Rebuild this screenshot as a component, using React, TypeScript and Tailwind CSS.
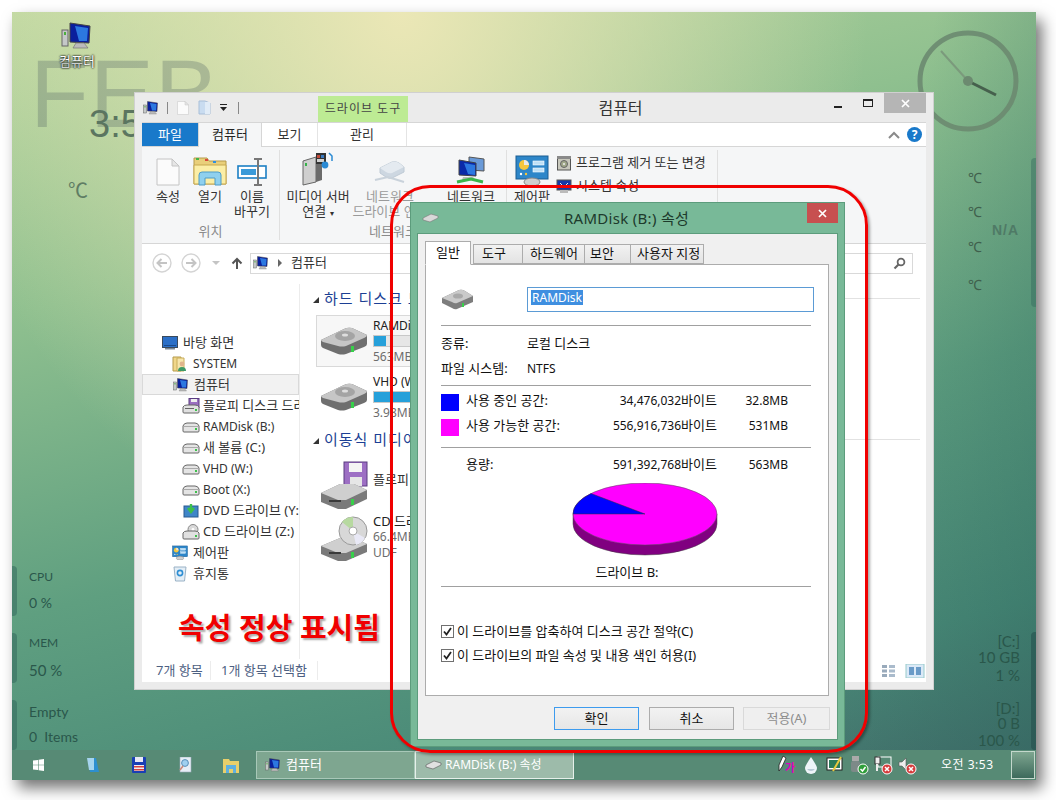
import React from "react";

// ---- icons ----
const PcIcon = ({ size = 16 }: { size?: number }) => (
  <svg width={size} height={size} viewBox="0 0 32 32" className="shrink-0">
    <rect x="1" y="10" width="6" height="16" fill="#c4c8c8" stroke="#666" />
    <rect x="3" y="12" width="2" height="3" fill="#4caf3c" />
    <path d="M9 3 L29 6 L28 23 L9 22 Z" fill="#0a1f9c" stroke="#444" />
    <path d="M14 6 L27 8 L26 21 L18 21 Z" fill="#2c78e0" />
    <path d="M15 23 h8 l4 5 h-15 Z" fill="#bbb" stroke="#777" strokeWidth=".7" />
  </svg>
);

const DriveBig = () => (
  <svg width="48" height="30" viewBox="0 0 48 30" className="shrink-0">
    <path d="M1 14 L24 3 Q28 1 32 2 L47 9 V18 Q47 20 44 21 L26 28 Q22 29 18 28 L3 22 Q1 21 1 19 Z" fill="#6f6f6f" />
    <path d="M1 14 L24 3 Q28 1 32 2 L47 9 Q47 11 44 12 L26 20 Q22 21 18 20 L3 16 Q1 15 1 14 Z" fill="#c6c6c6" />
    <ellipse cx="25" cy="10" rx="10" ry="5" fill="#a4a4a4" />
    <ellipse cx="25" cy="9" rx="3" ry="1.5" fill="#dedede" />
    <rect x="31" y="20" width="3" height="6" fill="#37d04a" />
  </svg>
);

const DriveSmall = () => (
  <svg width="18" height="12" viewBox="0 0 18 12" className="shrink-0">
    <path d="M1 5 Q2 2 5 2 H13 Q16 2 17 5 V10 Q17 11 16 11 H2 Q1 11 1 10 Z" fill="#e4e4e4" stroke="#666" />
    <rect x="1.5" y="5" width="15" height="1" fill="#aaa" />
    <rect x="13" y="7" width="2" height="2" fill="#3cc04a" />
  </svg>
);

const FolderBig = () => (
  <svg width="34" height="30" viewBox="0 0 34 30" className="shrink-0">
    <path d="M1 2 H14 L16 5 H33 V28 H1 Z" fill="#e9cf7a" stroke="#b59a4a" />
    <rect x="3" y="2" width="3" height="2" fill="#43b649" />
    <rect x="12" y="3" width="3" height="2" fill="#d9483b" />
    <rect x="20" y="5" width="3" height="2" fill="#2f8fe0" />
    <path d="M1 9 H33 V28 H1 Z" fill="#fbeea6" stroke="#c7a850" />
    <path d="M6 29 V19 Q6 16 9 16 H25 Q28 16 28 19 V29 H22 V22 H12 V29 Z" fill="#8fd0ee" stroke="#4f9cc7" />
  </svg>
);

const RenameIcon = () => (
  <svg width="30" height="28" viewBox="0 0 30 28" className="shrink-0">
    <rect x="1" y="8" width="28" height="12" fill="#fff" stroke="#1c7fc4" strokeWidth="1.6" />
    <rect x="4" y="11" width="15" height="6" fill="#3a9ad9" />
    <path d="M17 1 H25 M21 1 V27 M17 27 H25" stroke="#777" strokeWidth="2" fill="none" />
  </svg>
);

const DocIcon = ({ w = 24, h = 28 }: { w?: number; h?: number }) => (
  <svg width={w} height={h} viewBox="0 0 24 28" className="shrink-0">
    <path d="M1 1 H16 L23 8 V27 H1 Z" fill="#fbfbfb" stroke="#c4c4c4" />
    <path d="M16 1 V8 H23 Z" fill="#e6e6e6" stroke="#c4c4c4" />
  </svg>
);

const MediaServerIcon = () => (
  <svg width="32" height="34" viewBox="0 0 32 34" className="shrink-0">
    <path d="M1 9 L14 5 V30 L1 33 Z" fill="#cfcfcf" stroke="#666" />
    <path d="M14 5 L20 8 V28 L14 30 Z" fill="#6b6b6b" />
    <rect x="3" y="11" width="2" height="3" fill="#36b24a" />
    <rect x="14" y="1" width="10" height="11" fill="#333" />
    <rect x="15" y="3" width="3" height="3" fill="#c04a3a" />
    <rect x="19" y="3" width="3" height="3" fill="#3a7ac0" />
    <rect x="15" y="7" width="7" height="3" fill="#d0d0d0" />
    <circle cx="23" cy="13" r="3.4" fill="#2a8ad4" />
    <path d="M27 1 L30 4 V9" fill="none" stroke="#2a8ad4" strokeWidth="1.5" />
  </svg>
);

const NetDriveIcon = () => (
  <svg width="32" height="26" viewBox="0 0 32 26" className="shrink-0 opacity-50">
    <path d="M6 8 L18 2 Q22 1 25 3 L30 7 V12 L18 18 Q15 19 12 17 L6 13 Z" fill="#a6b9cc" stroke="#8aa0b5" />
    <path d="M6 8 L18 2 Q22 1 25 3 L30 7 L18 13 Q15 14 12 12 Z" fill="#d5e0ea" />
    <path d="M1 20 L14 17 L30 22" fill="none" stroke="#9fb0c0" strokeWidth="2" />
  </svg>
);

const NetworkIcon = () => (
  <svg width="32" height="30" viewBox="0 0 32 30" className="shrink-0">
    <path d="M14 1 L29 3 V15 L14 14 Z" fill="#6a9ad8" stroke="#555" />
    <path d="M4 4 L21 7 V20 L4 19 Z" fill="#0a2aa8" stroke="#444" />
    <path d="M9 7 L20 9 V19 L13 18 Z" fill="#2c78e0" />
    <path d="M8 21 h10 l3 3 h-14 Z" fill="#bbb" />
    <path d="M2 26 L16 23 L28 26" fill="none" stroke="#3bb54a" strokeWidth="3" />
  </svg>
);

const ControlPanelIcon = ({ w = 34, h = 32 }: { w?: number; h?: number }) => (
  <svg width={w} height={h} viewBox="0 0 34 32" className="shrink-0">
    <rect x="1" y="2" width="32" height="23" fill="#2d86c9" stroke="#1b5c92" />
    <circle cx="9" cy="11" r="5" fill="#f5c63c" />
    <path d="M9 11 V6 A5 5 0 0 1 14 11 Z" fill="#e8e8e8" />
    <rect x="18" y="7" width="11" height="4" fill="#bfe0f6" stroke="#fff" strokeWidth=".6" />
    <rect x="18" y="14" width="11" height="4" fill="#bfe0f6" stroke="#fff" strokeWidth=".6" />
    <circle cx="6" cy="20" r="1.2" fill="#fff" />
    <circle cx="11" cy="20" r="1.2" fill="#f5c63c" />
    <ellipse cx="17" cy="28" rx="8" ry="4" fill="#cfcfcf" stroke="#888" />
  </svg>
);

const ProgramIcon = () => (
  <svg width="16" height="16" viewBox="0 0 16 16" className="shrink-0">
    <rect x="1.5" y="3" width="13" height="12" fill="#c8c8bc" stroke="#555" />
    <rect x="1" y="1" width="14" height="3" fill="#8a8a8a" />
    <circle cx="8" cy="9" r="3.5" fill="#a0a888" stroke="#666" />
    <circle cx="8" cy="9" r="1" fill="#eee" />
  </svg>
);

const SystemIcon = () => (
  <svg width="16" height="15" viewBox="0 0 16 15" className="shrink-0">
    <rect x="1" y="1" width="14" height="10" fill="#1638a8" stroke="#555" />
    <path d="M4 4 L8 8 L12 4" stroke="#e8e8e8" fill="none" />
    <rect x="4" y="11" width="8" height="3" fill="#bbb" />
  </svg>
);

const DesktopNavIcon = () => (
  <svg width="16" height="14" viewBox="0 0 16 14" className="shrink-0">
    <rect x=".5" y=".5" width="15" height="11" fill="#2b6fc7" stroke="#3a4a5c" />
    <rect x="2" y="9" width="12" height="1" fill="#1a4a8a" />
    <rect x="3" y="12" width="10" height="1.5" fill="#7b8794" />
  </svg>
);

const UserFolderIcon = () => (
  <svg width="16" height="16" viewBox="0 0 16 16" className="shrink-0">
    <path d="M1 1 H9 V15 H1 Z" fill="#f0d78a" stroke="#b59a4a" />
    <path d="M5 2 H12 V15 H5 Z" fill="#f7e6ac" stroke="#c9ad5a" />
    <circle cx="10" cy="8" r="2.4" fill="#e0b48c" />
    <path d="M6 15 Q6 11 10 11 Q14 11 14 15 Z" fill="#3f9a66" />
  </svg>
);

const FloppyDriveSmall = () => (
  <svg width="18" height="16" viewBox="0 0 18 16" className="shrink-0">
    <rect x="7" y="0.5" width="10" height="9" fill="#9a6fc0" stroke="#5a3c80" />
    <rect x="9" y="1" width="6" height="3" fill="#eee" />
    <path d="M1 9 Q2 7 5 7 H13 Q16 7 17 9 V14 Q17 15 16 15 H2 Q1 15 1 14 Z" fill="#e0e0e0" stroke="#666" />
    <rect x="3" y="10" width="9" height="1" fill="#666" />
    <rect x="13" y="11" width="2" height="2" fill="#3cc04a" />
  </svg>
);

const DvdSmall = () => (
  <svg width="18" height="15" viewBox="0 0 18 15" className="shrink-0">
    <rect x="2" y="3" width="14" height="11" fill="#3f86c8" stroke="#2a5a90" />
    <path d="M9 1 V7 M6 5 L9 9 L12 5" stroke="#3cc04a" strokeWidth="2.4" fill="none" />
  </svg>
);

const CdSmall = () => (
  <svg width="18" height="16" viewBox="0 0 18 16" className="shrink-0">
    <circle cx="11" cy="5.5" r="5" fill="#d9d9d9" stroke="#888" />
    <circle cx="11" cy="5.5" r="1.4" fill="#fff" />
    <path d="M1 9 Q2 7 5 7 H13 Q16 7 17 9 V14 Q17 15 16 15 H2 Q1 15 1 14 Z" fill="#e0e0e0" stroke="#666" />
    <rect x="13" y="11" width="2" height="2" fill="#3cc04a" />
  </svg>
);

const RecycleIcon = () => (
  <svg width="16" height="17" viewBox="0 0 16 17" className="shrink-0">
    <path d="M2 2 H14 L12.5 16 H3.5 Z" fill="#e4eef6" stroke="#9ab2c6" />
    <circle cx="8" cy="8" r="2.6" fill="none" stroke="#2f8fd4" strokeWidth="1.6" />
  </svg>
);

const FloppyBig = () => (
  <svg width="48" height="50" viewBox="0 0 48 50" className="shrink-0">
    <rect x="24" y="1" width="23" height="24" fill="#9d6fc4" stroke="#5a3c80" />
    <rect x="29" y="2" width="13" height="9" fill="#f4f4f4" />
    <rect x="30" y="16" width="12" height="9" fill="#e6e6e6" />
    <path d="M1 32 L20 23 H34 L47 29 V38 L26 48 H18 L1 41 Z" fill="#7a7a7a" />
    <path d="M1 32 L20 23 H34 L47 29 L26 39 H18 Z" fill="#cfcfcf" />
    <rect x="9" y="39" width="12" height="2" fill="#3a3a3a" />
    <rect x="31" y="38" width="3" height="6" fill="#37d04a" />
  </svg>
);

const CdBig = () => (
  <svg width="48" height="46" viewBox="0 0 48 46" className="shrink-0">
    <path d="M1 30 L20 22 H34 L47 28 V36 L26 45 H18 L1 38 Z" fill="#7a7a7a" />
    <path d="M1 30 L20 22 H34 L47 28 L26 37 H18 Z" fill="#cfcfcf" />
    <rect x="9" y="36" width="12" height="2" fill="#3a3a3a" />
    <rect x="31" y="36" width="3" height="6" fill="#37d04a" />
    <circle cx="33" cy="15" r="14" fill="#d8d8d8" stroke="#999" />
    <path d="M33 15 L22 6 A14 14 0 0 1 33 1 Z" fill="#b7d9a0" />
    <path d="M33 15 L45 22 A14 14 0 0 1 36 29 Z" fill="#e9e9f6" />
    <circle cx="33" cy="15" r="4" fill="#fff" stroke="#aaa" />
  </svg>
);

const ArrowCircle = ({ dir }: { dir: "l" | "r" }) => (
  <svg width="20" height="20" viewBox="0 0 20 20" className="shrink-0">
    <circle cx="10" cy="10" r="9" fill="#fff" stroke="#d4d4d4" strokeWidth="1.4" />
    <path d={dir === "l" ? "M15 10 H6 M9.5 6 L5.5 10 L9.5 14" : "M5 10 H14 M10.5 6 L14.5 10 L10.5 14"} stroke="#c4c4c4" strokeWidth="2" fill="none" />
  </svg>
);

const CloseX = () => (
  <svg width="9" height="9" viewBox="0 0 9 9">
    <path d="M1 1 L8 8 M8 1 L1 8" stroke="#fff" strokeWidth="1.7" />
  </svg>
);

const Checked = () => (
  <span className="w-[13px] h-[13px] border border-[#707070] bg-white flex items-center justify-center shrink-0">
    <svg width="11" height="11" viewBox="0 0 11 11">
      <path d="M2 5.5 L4.5 8.5 L9 2" stroke="#222" strokeWidth="1.8" fill="none" />
    </svg>
  </span>
);

// ---- explorer pieces ----
const RibbonBtn = ({ icon, lines, w, muted }: { icon: React.ReactNode; lines: React.ReactNode[]; w: string; muted?: boolean }) => (
  <div className={`flex flex-col items-center shrink-0 ${w} ${muted ? "text-[#9a9a9a]" : "text-[#333]"}`}>
    <div className="h-[30px] flex items-end justify-center">{icon}</div>
    <div className="mt-[3px] text-center leading-[15px] whitespace-nowrap">
      {lines.map((l, i) => (
        <div key={i}>{l}</div>
      ))}
    </div>
  </div>
);

const navItems: { label: string; cls: string; icon: React.ReactNode; selected?: boolean }[] = [
  { label: "바탕 화면", cls: "pl-[20px] gap-[5px] text-[13px]", icon: <DesktopNavIcon /> },
  { label: "SYSTEM", cls: "pl-[30px] gap-[5px]", icon: <UserFolderIcon /> },
  { label: "컴퓨터", cls: "pl-[30px] gap-[5px] text-[13px]", icon: <PcIcon />, selected: true },
  { label: "플로피 디스크 드라이브 (A:)", cls: "pl-[40px] gap-[3px] text-[13px]", icon: <FloppyDriveSmall /> },
  { label: "RAMDisk (B:)", cls: "pl-[40px] gap-[3px]", icon: <DriveSmall /> },
  { label: "새 볼륨 (C:)", cls: "pl-[40px] gap-[3px] text-[13px]", icon: <DriveSmall /> },
  { label: "VHD (W:)", cls: "pl-[40px] gap-[3px]", icon: <DriveSmall /> },
  { label: "Boot (X:)", cls: "pl-[40px] gap-[3px]", icon: <DriveSmall /> },
  { label: "DVD 드라이브 (Y:)", cls: "pl-[40px] gap-[3px] text-[13px]", icon: <DvdSmall /> },
  { label: "CD 드라이브 (Z:)", cls: "pl-[40px] gap-[3px] text-[13px]", icon: <CdSmall /> },
  { label: "제어판", cls: "pl-[30px] gap-[5px] text-[13px]", icon: <ControlPanelIcon w={16} h={15} /> },
  { label: "휴지통", cls: "pl-[30px] gap-[5px] text-[13px]", icon: <RecycleIcon /> },
];

const Heading = ({ label }: { label: string }) => (
  <div className="flex items-center h-[20px] pl-[4px] gap-[5px]">
    <span className="w-0 h-0 border-l-[6px] border-l-transparent border-b-[6px] border-b-[#333] mt-[3px]" />
    <span className="text-[15px] text-[#1c3f94] whitespace-nowrap tracking-[1px]">{label}</span>
    <span className="flex-1 border-t border-[#e2e2e2] ml-[4px]" />
  </div>
);

const DriveItem = ({ name, size, pct, box }: { name: string; size: string; pct: string; box?: boolean }) => (
  <div className={`flex h-[52px] w-[260px] ml-[7px] items-center pl-[3px] border text-[12px] ${box ? "border-[#d9d9d9] bg-[#f7f7f7]" : "border-transparent"}`}>
    <DriveBig />
    <div className="ml-[5px] flex-1 leading-[15px]">
      <div className="text-[#222] whitespace-nowrap">{name}</div>
      <div className="h-[12px] my-[2px] bg-[#e6e6e6] border border-[#c8c8c8]">
        <div className={`h-full bg-[#26a0da] ${pct}`} />
      </div>
      <div className="text-[#6d6d6d]">{size}</div>
    </div>
  </div>
);

const Explorer = () => (
  <div className="absolute left-[122px] top-[80px] w-[800px] h-[598px] bg-[#ebebeb] border border-[#d0d0d0] flex flex-col px-[7px] pb-[7px] text-[13px] text-[#333]">
    {/* title bar */}
    <div className="h-[29px] flex items-center shrink-0 relative">
      <div className="flex items-center w-[175px] ml-[1px]">
        <PcIcon />
        <span className="w-px h-[12px] bg-[#888] ml-[8px]" />
        <span className="ml-[9px]"><DocIcon w={12} h={14} /></span>
        <svg width="13" height="15" viewBox="0 0 13 15" className="ml-[9px]">
          <path d="M1 1 H7 L12 3 V14 H1 Z" fill="#c9dcf0" stroke="#a9bfd8" />
          <rect x="7" y="2" width="5" height="12" fill="#e1ecf7" />
        </svg>
        <svg width="9" height="8" viewBox="0 0 9 8" className="ml-[8px]">
          <rect x="1" y="0" width="7" height="1" fill="#222" />
          <path d="M1 3 H8 L4.5 7 Z" fill="#222" />
        </svg>
        <span className="w-px h-[12px] bg-[#888] ml-[10px]" />
      </div>
      <div className="w-[90px] h-[27px] mt-[3px] bg-[#bdeb94] flex items-center justify-center text-[#444] text-[12px] tracking-[1px]">드라이브 도구</div>
      <div className="flex-1 text-center text-[16px] text-[#333] pl-[10px]">컴퓨터</div>
      <div className="flex items-start h-full">
        <span className="w-[29px] h-[19px] flex items-end justify-center pb-[4px]"><span className="w-[8px] h-[2px] bg-[#222]" /></span>
        <span className="w-[17px] h-[19px] ml-[7px] flex items-center justify-center"><span className="w-[10px] h-[8px] border border-[#222] border-t-2" /></span>
        <span className="w-[42px] h-[20px] ml-[8px] bg-[#b5b5b5] flex items-center justify-center"><CloseX /></span>
      </div>
    </div>

    {/* tab strip */}
    <div className="h-[25px] bg-white border-y border-[#d6d6d6] flex items-stretch shrink-0 relative">
      <div className="w-[56px] bg-[#1979ca] text-white flex items-center justify-center">파일</div>
      <div className="w-[64px] bg-[#f5f6f7] border-x border-[#d6d6d6] -mb-px flex items-center justify-center text-[#222]">컴퓨터</div>
      <div className="w-[56px] flex items-center justify-center border-r border-[#e4e4e4]">보기</div>
      <div className="w-[89px] flex items-center justify-center border-r border-[#e4e4e4]">관리</div>
      <div className="flex-1" />
      <svg width="12" height="8" viewBox="0 0 12 8" className="self-center mr-[7px]">
        <path d="M1 7 L6 2 L11 7" stroke="#8a8a8a" strokeWidth="2" fill="none" />
      </svg>
      <span className="self-center w-[15px] h-[15px] mr-[4px] rounded-full bg-[#1979ca] text-white text-[12px] font-bold flex items-center justify-center">?</span>
    </div>

    {/* ribbon */}
    <div className="h-[97px] bg-[#f5f6f7] border-b border-[#d6d6d6] flex shrink-0">
      <div className="w-[138px] border-r border-[#e0e0e0] my-[3px] flex flex-col">
        <div className="flex flex-1 pt-[6px] pl-[5px]">
          <RibbonBtn w="w-[42px]" icon={<DocIcon />} lines={["속성"]} />
          <RibbonBtn w="w-[42px]" icon={<FolderBig />} lines={["열기"]} />
          <RibbonBtn w="w-[42px]" icon={<RenameIcon />} lines={["이름", "바꾸기"]} />
        </div>
        <div className="text-center text-[#8a8a8a] h-[18px] leading-[18px]">위치</div>
      </div>
      <div className="w-[227px] border-r border-[#e0e0e0] my-[3px] flex flex-col">
        <div className="flex flex-1 pt-[6px] pl-[2px]">
          <RibbonBtn
            w="w-[72px]"
            icon={<MediaServerIcon />}
            lines={["미디어 서버", <span key="k">연결 <span className="text-[8px]">▾</span></span>]}
          />
          <RibbonBtn w="w-[72px]" muted icon={<NetDriveIcon />} lines={["네트워크", "드라이브 연결"]} />
          <span className="w-[10px]" />
          <RibbonBtn w="w-[70px]" icon={<NetworkIcon />} lines={["네트워크"]} />
        </div>
        <div className="text-center text-[#8a8a8a] h-[18px] leading-[18px]">네트워크</div>
      </div>
      <div className="w-[211px] border-r border-[#e0e0e0] my-[3px] flex flex-col">
        <div className="flex flex-1 pt-[6px] pl-[6px]">
          <RibbonBtn w="w-[38px]" icon={<ControlPanelIcon />} lines={["제어판"]} />
          <div className="ml-[5px] flex flex-col gap-[7px] -mt-[1px]">
            <div className="flex items-center gap-[4px] h-[16px] whitespace-nowrap"><ProgramIcon />프로그램 제거 또는 변경</div>
            <div className="flex items-center gap-[4px] h-[16px] whitespace-nowrap"><SystemIcon />시스템 속성</div>
          </div>
        </div>
        <div className="h-[18px]" />
      </div>
    </div>

    {/* address bar */}
    <div className="h-[40px] bg-white flex items-center shrink-0 pl-[10px] pb-[2px]">
      <ArrowCircle dir="l" />
      <span className="ml-[9px]"><ArrowCircle dir="r" /></span>
      <span className="w-0 h-0 ml-[11px] border-x-[4px] border-x-transparent border-t-[4px] border-t-[#c4c4c4]" />
      <svg width="12" height="13" viewBox="0 0 12 13" className="ml-[11px]">
        <path d="M6 12 V2 M1.5 6.5 L6 2 L10.5 6.5" stroke="#555" strokeWidth="2" fill="none" />
      </svg>
      <div className="ml-[7px] flex-1 h-[21px] mr-[13px] border border-[#d9d9d9] flex items-center pl-[2px]">
        <PcIcon />
        <span className="w-0 h-0 ml-[9px] border-y-[4px] border-y-transparent border-l-[4px] border-l-[#666]" />
        <span className="ml-[9px]">컴퓨터</span>
        <span className="flex-1" />
        <svg width="13" height="13" viewBox="0 0 13 13" className="mr-[6px]">
          <circle cx="8" cy="5" r="3.4" fill="none" stroke="#666" strokeWidth="1.8" />
          <path d="M5.5 7.5 L1.5 11.5" stroke="#666" strokeWidth="2.2" />
        </svg>
      </div>
    </div>

    {/* main */}
    <div className="flex-1 bg-white flex min-h-0">
      <div className="w-[158px] h-[377px] border-r border-[#ececec] pt-[48px] shrink-0 overflow-hidden text-[12px]">
        {navItems.map((n) => (
          <div
            key={n.label}
            className={`h-[21px] flex items-center whitespace-nowrap ${n.cls} ${n.selected ? "bg-[#f2f2f2] border border-[#d9d9d9]" : ""}`}
          >
            {n.icon}
            <span className="text-[#333]">{n.label}</span>
          </div>
        ))}
      </div>
      <div className="flex-1 min-w-0 pt-[4px] pl-[9px] pr-[6px] relative">
        <Heading label="하드 디스크 드라이브 (2)" />
        <div className="mt-[7px]">
          <DriveItem box name="RAMDisk (B:)" size="563MB 중 531MB 사용 가능" pct="w-[6%]" />
        </div>
        <div className="mt-[4px]">
          <DriveItem name="VHD (W:)" size="3.98MB 중" pct="w-[90%]" />
        </div>
        <div className="mt-[6px]"><Heading label="이동식 미디어" /></div>
        <div className="flex items-start h-[50px] mt-[12px] pl-[11px] gap-[5px]">
          <FloppyBig />
          <span className="mt-[11px] leading-[15px]">플로피 디스크 드라이브</span>
        </div>
        <div className="flex items-start h-[46px] mt-[5px] pl-[11px] gap-[5px]">
          <CdBig />
          <div className="leading-[16px] -mt-[3px] text-[#6d6d6d] text-[12px]">
            <div className="text-[#222] text-[13px]">CD 드라이브</div>
            <div>66.4MB</div>
            <div>UDF</div>
          </div>
        </div>
        <div className="absolute -left-[121px] top-[322px] w-[200px] flex justify-center text-[29px] font-bold text-[#f00000] whitespace-nowrap [text-shadow:2px_2px_2px_#aaa]">
          속성 정상 표시됨
        </div>
      </div>
    </div>

    {/* status */}
    <div className="h-[23px] bg-white flex items-center shrink-0 pl-[14px] text-[#4d6082]">
      <span className="w-[55px] border-r border-[#ececec]">7개 항목</span>
      <span className="ml-[10px] pr-[10px] border-r border-[#ececec]">1개 항목 선택함</span>
      <span className="flex-1" />
      <svg width="44" height="14" viewBox="0 0 44 14" className="mr-[1px]">
        <rect x="1" y="1" width="5" height="3" fill="#9ab" />
        <rect x="1" y="5.5" width="5" height="3" fill="#9ab" />
        <rect x="1" y="10" width="5" height="3" fill="#9ab" />
        <rect x="8" y="1" width="6" height="3" fill="#abc" />
        <rect x="8" y="5.5" width="6" height="3" fill="#abc" />
        <rect x="8" y="10" width="6" height="3" fill="#abc" />
        <rect x="25" y="0" width="18" height="14" fill="#dbe9f7" stroke="#9cc" />
        <rect x="28" y="3" width="5" height="8" fill="#6a9bc8" />
        <rect x="35" y="3" width="5" height="8" fill="#6a9bc8" />
      </svg>
    </div>
  </div>
);

// ---- properties dialog ----
const TabHead = ({ label, w, active }: { label: string; w: string; active?: boolean }) => (
  <div
    className={`${w} border border-[#acacac] flex items-center shrink-0 ${
      active ? "h-[24px] bg-white border-b-white relative z-10 -mb-px justify-center" : "h-[20px] bg-gradient-to-b from-[#f2f2f2] to-[#e3e3e3] -ml-px"
    }`}
  >
    {label}
  </div>
);

const Rule = () => <div className="h-px bg-[#a0a0a0] ml-[15px] mr-[17px] shrink-0" />;

const SpaceRow = ({ swatch, label, bytes, mb }: { swatch?: string; label: string; bytes: string; mb: string }) => (
  <div className="flex items-center h-[17px] pl-[15px]">
    <span className={`w-[18px] h-[17px] shrink-0 ${swatch ?? ""}`} />
    <span className="ml-[7px] pb-[3px] w-[144px] whitespace-nowrap">{label}</span>
    <span className="w-[107px] pb-[3px] text-right whitespace-nowrap text-[12px]">
      {bytes}
      <span className="text-[13px]">바이트</span>
    </span>
    <span className="w-[71px] pb-[3px] text-right whitespace-nowrap text-[12px]">{mb}</span>
  </div>
);

const Dialog = () => (
  <div className="absolute left-[398px] top-[190px] w-[435px] h-[545px] bg-[#78b998] border border-[#5c9c7c] flex flex-col px-[6px] pb-[6px] text-[13px] text-[#111]">
    <div className="h-[30px] flex items-center shrink-0 relative">
      <span className="ml-[5px]">
        <svg width="17" height="10" viewBox="0 0 17 10">
          <path d="M1 5 L9 1 L16 3 V5 L8 9 L1 7 Z" fill="#d8d8d8" stroke="#777" strokeWidth=".6" />
        </svg>
      </span>
      <span className="flex-1 text-center text-[15px] tracking-[.3px] text-[#1d3a2c] pr-[24px]">RAMDisk (B:) 속성</span>
      <span className="absolute right-[0px] top-0 w-[31px] h-[20px] bg-[#c75050] flex items-center justify-center"><CloseX /></span>
    </div>
    <div className="flex-1 bg-[#f0f0f0] border border-[#5c9c7c] flex flex-col pl-[7px] pr-[8px] pt-[7px] pb-[9px] min-h-0">
      <div className="flex items-end shrink-0 h-[23px] relative">
        <TabHead active label="일반" w="w-[46px]" />
        <span className="w-[3px]" />
        <TabHead label="도구" w="w-[50px] pl-[8px]" />
        <TabHead label="하드웨어" w="w-[63px] pl-[7px]" />
        <TabHead label="보안" w="w-[47px] pl-[5px]" />
        <TabHead label="사용자 지정" w="w-[74px] pl-[6px]" />
      </div>
      <div className="flex-1 bg-white border border-[#acacac] flex flex-col min-h-0">
        <div className="flex items-center h-[60px] pt-[9px] pl-[15px] shrink-0">
          <svg width="33" height="21" viewBox="0 0 33 21" className="shrink-0">
            <path d="M1 9 L18 1 Q21 0 24 2 L32 7 V13 L16 20 Q14 21 11 19 L1 14 Z" fill="#7d7d7d" />
            <path d="M1 9 L18 1 Q21 0 24 2 L32 7 L16 14 Q14 15 11 13 Z" fill="#cacaca" />
            <ellipse cx="17" cy="7" rx="5" ry="2.6" fill="#a9a9a9" />
            <rect x="21" y="14" width="2" height="4" fill="#37d04a" />
          </svg>
          <div className="ml-[53px] w-[287px] h-[25px] border border-[#5b9bd5] flex items-center pl-[3px] pb-[5px] text-[12px]">
            <span className="bg-[#3f8fe0] text-white leading-[15px] px-px">RAMDisk</span>
          </div>
        </div>
        <Rule />
        <div className="h-[59px] pl-[15px] pt-[5px] leading-[25px] shrink-0">
          <div className="flex"><span className="w-[86px]">종류:</span><span>로컬 디스크</span></div>
          <div className="flex"><span className="w-[86px]">파일 시스템:</span><span className="text-[12px]">NTFS</span></div>
        </div>
        <Rule />
        <div className="h-[61px] pt-[8px] flex flex-col gap-[8px] shrink-0">
          <SpaceRow swatch="bg-[#0000ff]" label="사용 중인 공간:" bytes="34,476,032" mb="32.8MB" />
          <SpaceRow swatch="bg-[#ff00ff]" label="사용 가능한 공간:" bytes="556,916,736" mb="531MB" />
        </div>
        <Rule />
        <div className="pt-[10px] shrink-0">
          <SpaceRow label="용량:" bytes="591,392,768" mb="563MB" />
        </div>
        <div className="flex justify-center shrink-0 pl-[35px] mt-[8px]">
          <svg width="146" height="74" viewBox="0 0 146 74">
            <path d="M1 31 V41 A72 31 0 0 0 145 41 V31 Z" fill="#800080" stroke="#444" strokeWidth=".5" />
            <ellipse cx="73" cy="31" rx="72" ry="31" fill="#ff00ff" stroke="#555" strokeWidth=".5" />
            <path d="M73 31 L1 31 A72 31 0 0 1 19 10.5 Z" fill="#0000ff" stroke="#333" strokeWidth=".5" />
          </svg>
        </div>
        <div className="text-center mt-[6px] h-[17px] shrink-0">드라이브 B:</div>
        <div className="mt-[6px]"><Rule /></div>
        <div className="mt-[37px] pl-[15px] flex flex-col gap-[9px] shrink-0">
          <div className="flex items-center gap-[3px] h-[15px]"><Checked />이 드라이브를 압축하여 디스크 공간 절약(C)</div>
          <div className="flex items-center gap-[3px] h-[15px]"><Checked />이 드라이브의 파일 속성 및 내용 색인 허용(I)</div>
        </div>
      </div>
      <div className="flex justify-end pt-[11px] shrink-0 -mr-[1px]">
        <span className="w-[85px] h-[23px] border border-[#3d9bee] bg-gradient-to-b from-[#f2f2f2] to-[#e6e6e6] flex items-center justify-center">확인</span>
        <span className="w-[85px] h-[23px] ml-[10px] border border-[#acacac] bg-gradient-to-b from-[#f2f2f2] to-[#e6e6e6] flex items-center justify-center">취소</span>
        <span className="w-[87px] h-[23px] ml-[9px] border border-[#d9d9d9] bg-[#efefef] text-[#8d8d8d] flex items-center justify-center">적용(A)</span>
      </div>
    </div>
  </div>
);

// ---- desktop widgets ----
const Clock = () => (
  <svg width="104" height="104" viewBox="0 0 104 104" className="absolute left-[904px] top-[17px]">
    <circle cx="52" cy="52" r="48" fill="none" stroke="#6c8a70" strokeWidth="5" opacity=".9" />
    <path d="M52 52 L25 22" stroke="#7b9a7c" strokeWidth="2" />
    <path d="M52 52 L80 66" stroke="#46604d" strokeWidth="3" />
    <circle cx="52" cy="52" r="5" fill="#6c8a70" />
  </svg>
);

const Celsius = ({ cls }: { cls: string }) => <span className={`absolute text-[14px] text-[#3f5f4c] ${cls}`}>℃</span>;

const SideBar = ({ cls }: { cls: string }) => <span className={`absolute w-[5px] bg-[#30645a] opacity-50 rounded-r ${cls}`} />;

const Widget = ({ cls, text }: { cls: string; text: string }) => (
  <span className={`absolute font-['Lato',sans-serif] text-[#2a574b] whitespace-pre ${cls}`}>{text}</span>
);

const trayBase = "w-[20px] h-[20px] shrink-0";

const Taskbar = () => (
  <div className="h-[30px] bg-[#578a75] shrink-0 flex items-stretch relative text-[12px] text-white">
    <div className="w-[244px] flex items-center shrink-0">
      <svg width="11" height="12" viewBox="0 0 11 12" className="ml-[21px]">
        <path d="M0 1.6 L5 .9 V5.7 H0 Z M5.6 .8 L11 0 V5.7 H5.6 Z M0 6.3 H5 V11.1 L0 10.4 Z M5.6 6.3 H11 V12 L5.6 11.2 Z" fill="#fff" />
      </svg>
      <svg width="14" height="16" viewBox="0 0 14 16" className="ml-[42px]">
        <path d="M2 1 H10 L13 15 H4 Z" fill="#2d8fd0" />
        <path d="M1 1 H8 V13 H3 Z" fill="#a6d4ee" />
      </svg>
      <svg width="14" height="16" viewBox="0 0 14 16" className="ml-[32px]">
        <rect x="0" y="0" width="14" height="16" rx="1" fill="#1a3fb4" />
        <rect x="3" y="0" width="8" height="5" fill="#e8e8f4" />
        <rect x="2" y="8" width="10" height="6" fill="#f0f0f0" />
        <rect x="2" y="9" width="10" height="1.5" fill="#d64040" />
        <rect x="2" y="12" width="10" height="1.5" fill="#d64040" />
      </svg>
      <svg width="13" height="16" viewBox="0 0 13 16" className="ml-[33px]">
        <rect x="1" y="0" width="11" height="15" fill="#e7eef6" stroke="#9ab" strokeWidth=".6" />
        <circle cx="6" cy="6" r="3.4" fill="#9fd0f0" stroke="#5a8fb8" />
        <path d="M4 9 L1 13" stroke="#c87" strokeWidth="1.6" />
      </svg>
      <svg width="16" height="15" viewBox="0 0 16 15" className="ml-[31px]">
        <path d="M0 1 H6 L7 3 H16 V15 H0 Z" fill="#e9cf6a" />
        <rect x="3" y="7" width="10" height="8" fill="#5fb0e0" />
        <rect x="6" y="11" width="4" height="4" fill="#e9cf6a" />
      </svg>
    </div>
    <div className="w-[159px] my-px border border-[#a8c8b8] bg-[#7ea690] flex items-center pl-[8px] gap-[5px] shrink-0 text-[13px]">
      <PcIcon />
      <span>컴퓨터</span>
    </div>
    <div className="w-[159px] my-px border border-[#e6f0ea] bg-[#9dbbaa] flex items-center pl-[9px] gap-[3px] shrink-0">
      <svg width="17" height="10" viewBox="0 0 17 10">
        <path d="M1 5 L9 1 L16 3 V5 L8 9 L1 7 Z" fill="#e0e0e0" stroke="#555" strokeWidth=".6" />
      </svg>
      <span>RAMDisk (B:) 속성</span>
    </div>
    <div className="flex-1 flex items-center pl-[203px]">
      <div className="flex items-center gap-[4px]">
        <svg viewBox="0 0 20 20" className={trayBase}>
          <path d="M6 1 L9 3 L5 12 L2 16 L2 10 Z" fill="#fff" stroke="#222" strokeWidth=".8" />
          <text x="8" y="17" fontSize="11" fontWeight="700" fill="#e000c0">가</text>
        </svg>
        <svg viewBox="0 0 20 20" className={trayBase}><path d="M10 2 Q4 11 4 13 A6 6 0 0 0 16 13 Q16 11 10 2 Z" fill="#eef4f8" /><path d="M6 14 A5 5 0 0 0 14 14 Z" fill="#b8c9d6" /></svg>
        <svg viewBox="0 0 20 20" className={trayBase}><rect x="2" y="3" width="15" height="12" fill="#fff" stroke="#222" /><rect x="4" y="5" width="11" height="8" fill="#2c7a5a" /><path d="M16 2 L8 16" stroke="#e8c83c" strokeWidth="2" /></svg>
        <svg viewBox="0 0 20 20" className={trayBase}><rect x="3" y="1" width="7" height="5" fill="#aaa" /><rect x="2" y="6" width="9" height="11" rx="2" fill="#7d8a88" /><circle cx="14" cy="14" r="5" fill="#2e9e3a" stroke="#fff" /><path d="M11.5 14 L13.5 16 L16.5 12" stroke="#fff" strokeWidth="1.5" fill="none" /></svg>
        <svg viewBox="0 0 20 20" className={trayBase}><rect x="5" y="2" width="13" height="10" fill="none" stroke="#fff" /><rect x="2" y="2" width="5" height="7" fill="#eee" stroke="#333" /><path d="M4 9 V16" stroke="#eee" strokeWidth="2" /><circle cx="14" cy="14" r="5" fill="#d63c3c" stroke="#fff" /><path d="M12 12 L16 16 M16 12 L12 16" stroke="#fff" strokeWidth="1.5" /></svg>
        <svg viewBox="0 0 20 20" className={trayBase}><path d="M2 7 H5 L9 3 V15 L5 11 H2 Z" fill="#eee" stroke="#555" strokeWidth=".6" /><circle cx="14" cy="14" r="5" fill="#d63c3c" stroke="#fff" /><path d="M12 12 L16 16 M16 12 L12 16" stroke="#fff" strokeWidth="1.5" /></svg>
      </div>
      <span className="ml-[24px] whitespace-nowrap tracking-[.5px]">오전 3:53</span>
      <span className="flex-1" />
      <span className="w-[24px] h-[28px] border border-[#c4d8cc] bg-gradient-to-b from-[#7ea690] to-[#3d6a5c] mr-px" />
    </div>
  </div>
);

export default function App() {
  return (
    <div className="w-[1056px] h-[800px] bg-white overflow-hidden font-['Noto_Sans','Noto_Sans_CJK_KR',sans-serif] pt-[12px] pl-[12px]">
      <div className="relative w-[1024px] h-[768px] flex flex-col shadow-[6px_8px_14px_rgba(0,0,0,.55)] bg-[#5d9a7c]">
        <div className="flex-1 relative overflow-hidden bg-[radial-gradient(ellipse_at_38%_0%,#ebe7b6_0%,rgba(235,231,182,0)_52%),linear-gradient(100deg,rgba(0,0,0,0)_80%,rgba(40,100,90,.4)_100%),linear-gradient(165deg,#bcd7a0_0%,#8fc08f_30%,#5f9f80_60%,#4a8a78_85%,#446f6c_100%)]">
          {/* desktop icon */}
          <div className="absolute left-[40px] top-[8px] w-[50px] flex flex-col items-center text-[13px] leading-[16px] text-white [text-shadow:0_0_2px_#000,0_0_2px_#000]">
            <PcIcon size={32} />
            <span className="mt-[1px] whitespace-nowrap">컴퓨터</span>
          </div>

          <span className="absolute left-[18px] top-[34px] text-[96px] leading-none font-['Liberation_Sans',sans-serif] text-[#566] opacity-30 tracking-[1px]">FEB</span>
          <span className="absolute left-[77px] top-[93px] text-[38px] leading-none font-['Liberation_Sans',sans-serif] text-[#5b7560]">3:53</span>
          <span className="absolute left-[56px] top-[164px] text-[20px] text-[#5f7d64] font-['Liberation_Sans','Noto_Sans_CJK_KR',sans-serif]">℃</span>

          <Clock />
          <Celsius cls="left-[956px] top-[155px]" />
          <Celsius cls="left-[956px] top-[189px]" />
          <Celsius cls="left-[956px] top-[224px]" />
          <Celsius cls="left-[956px] top-[262px]" />
          <span className="absolute left-[980px] top-[208px] text-[14px] font-bold text-[#4f7a66] tracking-[1px] font-['Liberation_Sans',sans-serif]">N/A</span>

          <SideBar cls="left-0 top-[554px] h-[50px]" />
          <SideBar cls="left-0 top-[621px] h-[50px]" />
          <SideBar cls="left-0 top-[688px] h-[50px]" />
          <span className="absolute right-0 top-[146px] w-[5px] h-[149px] bg-[#30645a] opacity-40 rounded-l" />
          <span className="absolute right-0 top-[620px] w-[5px] h-[118px] bg-[#1f4a48] opacity-50 rounded-l" />

          <Widget cls="left-[17px] top-[556px] text-[12px]" text="CPU" />
          <Widget cls="left-[17px] top-[580px] text-[14px]" text="0 %" />
          <Widget cls="left-[17px] top-[622px] text-[12px]" text="MEM" />
          <Widget cls="left-[17px] top-[647px] text-[15px]" text="50 %" />
          <Widget cls="left-[17px] top-[689px] text-[14px]" text="Empty" />
          <Widget cls="left-[17px] top-[714px] text-[14px]" text="0  Items" />
          <Widget cls="right-[16px] top-[618px] text-[15px]" text="[C:]" />
          <Widget cls="right-[16px] top-[634px] text-[15px]" text="10 GB" />
          <Widget cls="right-[16px] top-[652px] text-[15px]" text="1 %" />
          <Widget cls="right-[16px] top-[685px] text-[15px]" text="[D:]" />
          <Widget cls="right-[16px] top-[700px] text-[15px]" text="0 B" />
          <Widget cls="right-[16px] top-[717px] text-[15px]" text="100 %" />

          <Explorer />
          <Dialog />
        </div>
        <Taskbar />
        {/* hand drawn red outline, runs over the taskbar edge */}
        <div className="absolute left-[378px] top-[173px] w-[478px] h-[568px] border-[3px] border-[#f00000] rounded-[40px] [box-shadow:2px_2px_3px_rgba(0,0,0,.35)] z-20 pointer-events-none" />
      </div>
    </div>
  );
}
